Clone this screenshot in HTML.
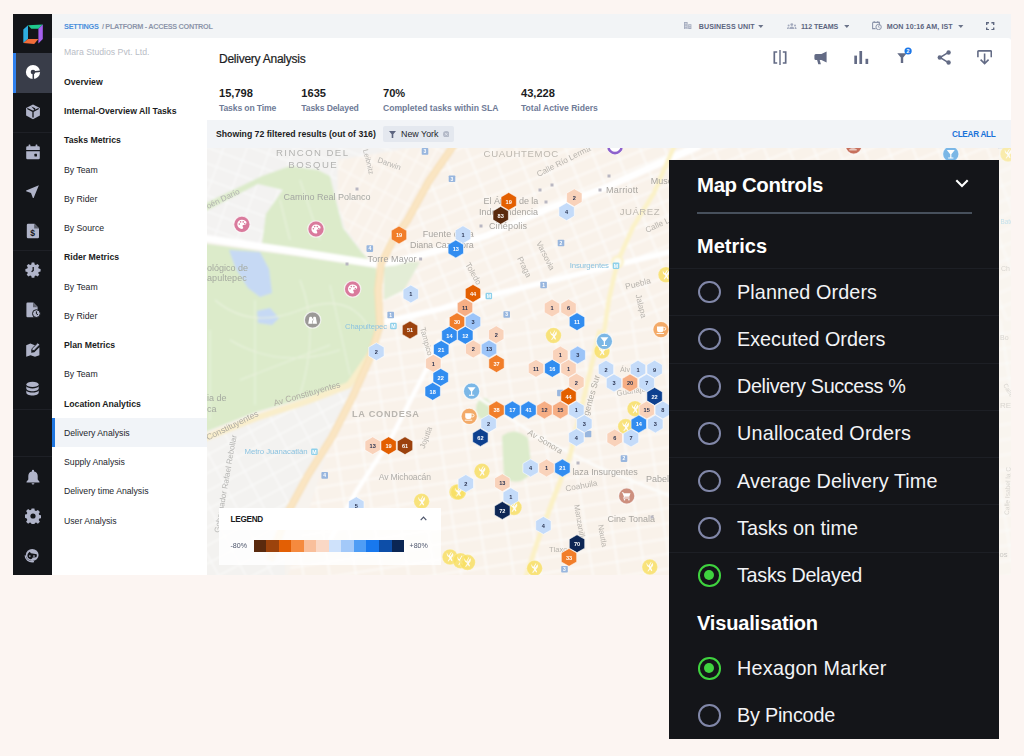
<!DOCTYPE html>
<html><head><meta charset="utf-8"><title>Delivery Analysis</title>
<style>
*{box-sizing:border-box;margin:0;padding:0}
html,body{width:1024px;height:756px;overflow:hidden}
body{background:#fcf5f2;font-family:"Liberation Sans",sans-serif;position:relative;color:#1d1f26}
.abs{position:absolute}
#app{position:absolute;left:13px;top:14px;width:998px;height:561px;background:#fff;overflow:hidden}
#rail{position:absolute;left:0;top:0;width:39px;height:561px;background:#131519}
#rail .act{position:absolute;left:0;top:39px;width:39px;height:40px;background:#393d49;border-left:3px solid #2f80ed}
#rail svg{position:absolute}
#rail .sep{position:absolute;left:0;width:39px;height:1px;background:#1e2026}
#top{position:absolute;left:39px;top:0;width:959px;height:27px;background:#f2f4f6}
#top .bc{position:absolute;left:12px;top:7.6px;font-size:7.3px;font-weight:700;letter-spacing:-.24px;color:#8d95aa;white-space:nowrap}
#top .bc b{color:#4a8fdc;margin-right:1.6px}#top .bc span{letter-spacing:-.3px}
.tr{position:absolute;top:8.5px;font-size:7.1px;font-weight:700;color:#5c6580;white-space:nowrap;letter-spacing:.1px}
#nav{position:absolute;left:39px;top:23.5px;width:155px;height:538px;background:#fff}
#nav div{position:absolute;left:12px;font-size:8.7px;white-space:nowrap;color:#23252c;line-height:12px}
#nav .h{font-weight:700;color:#1b1c22}
#nav .sel{left:0;width:155px;height:29px;background:#f1f4f8;border-left:3px solid #1f76e0}
#main{position:absolute;left:194px;top:23.5px;width:804px;height:538px;background:#fff;border-top-right-radius:3px;overflow:hidden}
#title{position:absolute;left:12px;top:14px;font-size:12px;letter-spacing:-.25px;-webkit-text-stroke:.2px #1b1c22;color:#1b1c22;white-space:nowrap}
.st{position:absolute;top:49.5px;white-space:nowrap}
.st b{display:block;font-size:11.1px;color:#1b1c22;line-height:13px}
.st span{display:block;font-size:8.6px;color:#6f7b97;font-weight:700;margin-top:2.8px;line-height:11px}
#fbar{position:absolute;left:0;top:82px;width:804px;height:28.5px;background:#f2f4f7}
#fbar .sh{position:absolute;left:9px;top:9.8px;font-size:8.7px;font-weight:700;color:#1b1c22;white-space:nowrap}
#fbar .chip{position:absolute;left:175.6px;top:6px;width:71.2px;height:16.6px;background:#e4e8ef;border-radius:2px}
#fbar .chip span{position:absolute;left:18.4px;top:3.2px;font-size:8.9px;color:#23252c;white-space:nowrap}
#fbar .clr{position:absolute;right:15.5px;top:10.9px;font-size:8.2px;letter-spacing:-.29px;font-weight:700;color:#1a73d9;white-space:nowrap}
#map{position:absolute;left:0;top:110.5px;width:804px;height:427.5px;background:#f4f2ee;overflow:hidden}
#legend{position:absolute;left:11.5px;top:359.5px;width:222px;height:57px;background:rgba(255,255,255,.82)}
#legend .lh{position:absolute;left:0;top:0;width:222px;height:22px;background:#fff}
#legend .lt{position:absolute;left:12px;top:7.7px;font-size:8.2px;font-weight:700;color:#1b1c22;letter-spacing:-.28px}
#legend .pc{position:absolute;top:34px;font-size:7.1px;color:#4d556b}
#legend .bar{position:absolute;left:35px;top:32.5px;height:11.5px;width:150.6px;display:flex}
#legend .bar i{flex:1;display:block}
#panel{position:absolute;left:669px;top:160px;width:330px;height:579px;background:#141519}
#panel .t{position:absolute;left:28px;font-weight:700;color:#fff;white-space:nowrap}
#panel .hr{position:absolute;left:28px;top:52px;width:275px;height:1.8px;background:#47505c}
#panel .row{position:absolute;left:0;width:330px;height:47px;border-top:1px solid #1d1f25}
#panel .row i{position:absolute;left:29.2px;top:11.6px;width:22.6px;height:22.6px;border:2.3px solid #8187a8;border-radius:50%}
#panel .row i.on{border-color:#3fd33f;border-width:2.6px}
#panel .row i.on:after{content:"";position:absolute;left:3.5px;top:3.5px;width:10.4px;height:10.4px;border-radius:50%;background:#3fd33f}
#panel .row span{position:absolute;left:68px;top:11.5px;font-size:19.8px;color:#f2f3f6;white-space:nowrap;line-height:22px}
svg text{font-family:"Liberation Sans",sans-serif}
.hx text{font-size:5.6px;font-weight:700;text-anchor:middle}
</style></head>
<body>
<div id="app">
 <div id="rail">
  <div class="act"></div>
  <div class="sep" style="top:118px"></div><div class="sep" style="top:236px"></div><div class="sep" style="top:395px"></div><div class="sep" style="top:442px"></div>
  <svg style="left:9.6px;top:9.6px;width:20px;height:20.2px" viewBox="0 0 20 20"><path d="M.3 5.5L5 1.2V15L.3 18.8z" fill="#2eaee0"/><path d="M5 1.2L19.8.3l-4.4 4.4H8.3z" fill="#1fc98e"/><path d="M19.8.3V15l-4.4 4.4V4.7z" fill="#a560ee"/><path d="M.3 18.8L5 14.8l10.4.2-4.2 4.9z" fill="#f26d3a"/></svg><svg style="left:11.6px;top:50.4px;width:16px;height:16px" viewBox="0 0 16 16"><circle cx="8" cy="8" r="7.1" fill="#fff"/><circle cx="8" cy="8" r="2.3" fill="#393d49"/><path d="M8 8L15.5 7.2M8.3 8v7.5" stroke="#393d49" stroke-width="1.5" fill="none"/></svg>
<svg style="left:11.6px;top:90.1px;width:16px;height:16px" viewBox="0 0 16 16"><path d="M8 .6l6.9 3.3v7.7L8 15.2 1.1 11.6V3.9z" fill="#b0b4c9"/><path d="M8 7.4v6.2M2.3 4.5L8 7.4l5.7-2.9" stroke="#131519" stroke-width="1.3" fill="none"/><path d="M6.4 2.6L10.2 4.2 10.2 6.6 8.8 5.3z" fill="#131519"/></svg>
<svg style="left:11.8px;top:130.2px;width:16px;height:16px" viewBox="0 0 16 16"><path d="M1.2 3.4a1.2 1.2 0 0 1 1.2-1.2h11.2a1.2 1.2 0 0 1 1.2 1.2V6H1.2zM1.2 7.2h13.6v6.8a1.2 1.2 0 0 1-1.2 1.2H2.4a1.2 1.2 0 0 1-1.2-1.2z" fill="#b0b4c9"/><rect x="3.6" y=".6" width="1.8" height="3" rx=".5" fill="#b0b4c9"/><rect x="10.6" y=".6" width="1.8" height="3" rx=".5" fill="#b0b4c9"/><rect x="9.4" y="9.8" width="2.6" height="2.6" rx=".4" fill="#131519"/></svg>
<svg style="left:12.3px;top:170px;width:15px;height:15px" viewBox="0 0 16 16"><path d="M14.8 1.2L1.2 6.9v.8l5.2 2 2 5.2h.8z" fill="#b0b4c9"/></svg>
<svg style="left:11.7px;top:208.7px;width:16px;height:16px" viewBox="0 0 16 16"><path d="M3 .8h6.6L14 5.2V14a1.2 1.2 0 0 1-1.2 1.2H3A1.2 1.2 0 0 1 1.8 14V2A1.2 1.2 0 0 1 3 .8z" fill="#b0b4c9"/><path d="M9.2.8v4.8H14" fill="#131519" opacity=".55"/><text x="7.6" y="13" font-size="8.5" font-weight="700" fill="#131519" text-anchor="middle" font-family="Liberation Sans">$</text></svg>
<svg style="left:11.5px;top:248.2px;width:16px;height:16px" viewBox="0 0 16 16"><path d="M6.7.6h2.6l.4 1.9 1.2.5 1.6-1.1 1.8 1.8-1.1 1.6.5 1.2 1.9.4v2.6l-1.9.4-.5 1.2 1.1 1.6-1.8 1.8-1.6-1.1-1.2.5-.4 1.9H6.7l-.4-1.9-1.2-.5-1.6 1.1-1.8-1.8 1.1-1.6-.5-1.2-1.9-.4V6.9l1.9-.4.5-1.2-1.1-1.6 1.8-1.8 1.6 1.1 1.2-.5z" fill="#b0b4c9"/><path d="M8.2 5v3.4L6.6 9.8" stroke="#131519" stroke-width="1.3" fill="none"/></svg>
<svg style="left:11.6px;top:287.9px;width:16px;height:16px" viewBox="0 0 16 16"><path d="M2.6.6h5.8L12.6 4.8V8a4.6 4.6 0 0 0-3.8 7.2H2.6A1.2 1.2 0 0 1 1.4 14V1.8A1.2 1.2 0 0 1 2.6.6z" fill="#b0b4c9"/><path d="M8 .6v4.6h4.6" fill="#131519" opacity=".5"/><circle cx="11.4" cy="11.6" r="3.9" fill="#b0b4c9" stroke="#131519" stroke-width="1"/><path d="M11.4 9.4v2.4l1.6.9" stroke="#131519" stroke-width="1" fill="none"/></svg>
<svg style="left:11.8px;top:327.5px;width:16px;height:16px" viewBox="0 0 16 16"><path d="M1.2 3.2l4.2-1.6 4.4 1.6 1.4-.5-4.6 4.8-.4 3.2 3.2-.4 5-5v7.9l-4.4 1.6-4.4-1.6-4.4 1.6z" fill="#b0b4c9"/><path d="M12.8.8l2 2-5.6 5.6-2.4.4.4-2.4z" fill="#b0b4c9" stroke="#131519" stroke-width=".8"/></svg>
<svg style="left:12.1px;top:367.1px;width:15px;height:15px" viewBox="0 0 16 16"><ellipse cx="8" cy="3.6" rx="6.6" ry="2.9" fill="#b0b4c9"/><path d="M1.4 5.6c1 1.5 3.5 2.3 6.6 2.3s5.6-.8 6.6-2.3v2.5c0 1.6-2.9 2.9-6.6 2.9S1.4 9.7 1.4 8.1zM1.4 10c1 1.5 3.5 2.3 6.6 2.3s5.6-.8 6.6-2.3v2.5c0 1.6-2.9 2.9-6.6 2.9s-6.6-1.3-6.6-2.9z" fill="#b0b4c9"/></svg>
<svg style="left:11.8px;top:454.9px;width:16px;height:16px" viewBox="0 0 16 16"><path d="M8 .8a1.1 1.1 0 0 1 1.1 1.1v.5a4.7 4.7 0 0 1 3.6 4.6v3.6l1.8 2.2v.8H1.5v-.8l1.8-2.2V7a4.7 4.7 0 0 1 3.6-4.6v-.5A1.1 1.1 0 0 1 8 .8zM6.6 14.2h2.8a1.4 1.4 0 0 1-2.8 0z" fill="#b0b4c9"/></svg>
<svg style="left:11.6px;top:494px;width:16px;height:16px" viewBox="0 0 16 16"><path d="M6.6.4h2.8l.4 2.1 1.3.6 1.8-1.2 2 2-1.2 1.8.6 1.3 2.1.4v2.8l-2.1.4-.6 1.3 1.2 1.8-2 2-1.8-1.2-1.3.6-.4 2.1H6.6l-.4-2.1-1.3-.6-1.8 1.2-2-2 1.2-1.8-.6-1.3L-.4 9.4V6.6l2.1-.4.6-1.3-1.2-1.8 2-2 1.8 1.2 1.3-.6z" fill="#b0b4c9"/><circle cx="8" cy="8" r="2.6" fill="#131519"/></svg>
<svg style="left:11.4px;top:534.2px;width:16px;height:16px" viewBox="0 0 16 16"><ellipse cx="8.2" cy="7" rx="6.4" ry="6" fill="#b0b4c9"/><path d="M3.4 7.6C3.6 5.8 4.6 4.6 5.8 3.8L6.9 5.2C9 5.6 11 6 12.7 6.2C13 7.4 12.8 8.6 12.2 9.2L8.6 9.6C8.3 10.6 7.6 11.2 6.6 11.2C4.8 11.2 3.4 9.6 3.4 7.6Z" fill="#131519"/><circle cx="5.8" cy="8" r=".85" fill="#b0b4c9"/><circle cx="10" cy="8" r=".85" fill="#b0b4c9"/><path d="M1.3 7.4C1.1 11.4 4.6 14.4 10 13.6" fill="none" stroke="#b0b4c9" stroke-width="1.4"/></svg>
 </div>
 <div id="top">
  <div class="bc"><b>SETTINGS</b><span> / PLATFORM - ACCESS CONTROL</span></div>
  <svg class="abs" style="left:632.4px;top:8px" width="7.4" height="7.4" viewBox="0 0 7.4 7.4"><path d="M0 0h3.6v7.4H0zM4.2 2.2h3.2v5.2H4.2z" fill="#a3aabd"/><path d="M.8 1.4h2M.8 3h2M.8 4.6h2M.8 6.2h2M4.8 3.6h2M4.8 5.2h2" stroke="#f3f5f8" stroke-width=".6"/></svg>
<div class="tr" style="left:646.7px">BUSINESS UNIT</div>
<svg class="abs" style="left:706.2px;top:10.8px" width="5.6" height="3.2" viewBox="0 0 5.6 3.2"><path d="M.2 0h5.2L2.8 3z" fill="#6b7389"/></svg>
<svg class="abs" style="left:735px;top:8.6px" width="9.6" height="6" viewBox="0 0 9.6 6"><circle cx="4.8" cy="1.6" r="1.4" fill="#a3aabd"/><path d="M2.2 6c0-1.8 1.2-2.6 2.6-2.6S7.4 4.2 7.4 6z" fill="#a3aabd"/><circle cx="1.6" cy="2.4" r="1" fill="#a3aabd"/><circle cx="8" cy="2.4" r="1" fill="#a3aabd"/><path d="M0 6c0-1.4.7-2 1.7-2v2zM9.6 6c0-1.4-.7-2-1.7-2v2z" fill="#a3aabd"/></svg>
<div class="tr" style="left:748.9px;letter-spacing:-.1px">112 TEAMS</div>
<svg class="abs" style="left:791.6px;top:10.8px" width="5.6" height="3.2" viewBox="0 0 5.6 3.2"><path d="M.2 0h5.2L2.8 3z" fill="#6b7389"/></svg>
<svg class="abs" style="left:820.3px;top:7.2px" width="9.8" height="9" viewBox="0 0 9.8 9"><path d="M.6 1.4h6.8v3M.6 1.4v6.2h3" fill="none" stroke="#8d95ab" stroke-width="1.1"/><path d="M2.2 0v2M5.8 0v2" stroke="#8d95ab" stroke-width="1"/><circle cx="6.6" cy="6" r="2.7" fill="none" stroke="#8d95ab" stroke-width="1"/><path d="M6.6 4.6V6.2l1 .6" fill="none" stroke="#8d95ab" stroke-width=".8"/></svg>
<div class="tr" style="left:834.7px">MON 10:16 AM, IST</div>
<svg class="abs" style="left:906px;top:10.8px" width="5.6" height="3.2" viewBox="0 0 5.6 3.2"><path d="M.2 0h5.2L2.8 3z" fill="#6b7389"/></svg>
<svg class="abs" style="left:934.4px;top:7.6px" width="8.4" height="8.4" viewBox="0 0 8.4 8.4"><path d="M.7 3V.7H3M5.4.7h2.3V3M7.7 5.4v2.3H5.4M3 7.7H.7V5.4" fill="none" stroke="#5f6880" stroke-width="1.4"/></svg>
 </div>
 <div id="nav">
  <div style="top:8.9px;color:#b9bdc6">Mara Studios Pvt. Ltd.</div>
  <div class="h" style="top:38.2px">Overview</div>
  <div class="h" style="top:67.4px">Internal-Overview All Tasks</div>
  <div class="h" style="top:96.7px">Tasks Metrics</div>
  <div style="top:126px">By Team</div>
  <div style="top:155.2px">By Rider</div>
  <div style="top:184.5px">By Source</div>
  <div class="h" style="top:213.8px">Rider Metrics</div>
  <div style="top:243.1px">By Team</div>
  <div style="top:272.3px">By Rider</div>
  <div class="h" style="top:301.6px">Plan Metrics</div>
  <div style="top:330.9px">By Team</div>
  <div class="h" style="top:360.1px">Location Analytics</div>
  <div class="sel" style="top:380.5px"></div>
  <div style="top:389.4px">Delivery Analysis</div>
  <div style="top:418.7px">Supply Analysis</div>
  <div style="top:447.9px">Delivery time Analysis</div>
  <div style="top:477.2px">User Analysis</div>
 </div>
 <div id="main">
  <div id="title">Delivery Analysis</div>
  <svg class="abs" style="left:566.4px;top:12.5px" width="14" height="15.4" viewBox="0 0 14 15.4"><path d="M4.2 2H1.3V13H4.2M9.8 2h2.9V13H9.8" fill="none" stroke="#636b85" stroke-width="1.7"/><path d="M7 0V15.4" stroke="#636b85" stroke-width="1.4"/></svg>
<svg class="abs" style="left:607px;top:13.1px" width="14" height="14" viewBox="0 0 14 14"><path d="M12.6.4V11.4L7.4 8.9H5.7l1.2 4.3H4.3L3.1 8.9H1.9A1.5 1.5 0 0 1 .4 7.4V4.6a1.5 1.5 0 0 1 1.5-1.5h5.5z" fill="#636b85"/></svg>
<svg class="abs" style="left:647.4px;top:13.3px" width="15" height="13.6" viewBox="0 0 15 13.6"><rect x=".3" y="4.6" width="2.7" height="8.7" fill="#636b85"/><rect x="5.4" y="0" width="2.7" height="13.3" fill="#636b85"/><rect x="11.5" y="7.8" width="2.7" height="5.5" fill="#636b85"/></svg>
<svg class="abs" style="left:690.2px;top:9.5px" width="16" height="17" viewBox="0 0 16 17"><path d="M.3 6.3h9.4L6.2 10.6V16H3.8V10.6z" fill="#636b85"/><circle cx="11.1" cy="4" r="3.6" fill="#1b76e8"/><text x="11.1" y="5.9" font-size="5.4" font-weight="700" fill="#fff" text-anchor="middle">2</text></svg>
<svg class="abs" style="left:730px;top:12.5px" width="15" height="15" viewBox="0 0 15 15"><path d="M11.4 2.4L3 7.5l8.4 5.1" fill="none" stroke="#636b85" stroke-width="1.5"/><circle cx="11.6" cy="2.5" r="2.2" fill="#636b85"/><circle cx="2.8" cy="7.5" r="2.2" fill="#636b85"/><circle cx="11.6" cy="12.5" r="2.2" fill="#636b85"/></svg>
<svg class="abs" style="left:770.2px;top:12.5px" width="15.2" height="15.4" viewBox="0 0 15.2 15.4"><path d="M.9 7.2V1.6a.7.7 0 0 1 .7-.7H13.6a.7.7 0 0 1 .7.7V7.2" fill="none" stroke="#636b85" stroke-width="1.6"/><path d="M7.6 3.4V13.2M3.6 9.6l4 4 4-4" fill="none" stroke="#636b85" stroke-width="1.6"/></svg>
  <div class="st" style="left:12px"><b>15,798</b><span style="letter-spacing:-.14px">Tasks on Time</span></div>
  <div class="st" style="left:94.3px"><b>1635</b><span style="letter-spacing:-.13px">Tasks Delayed</span></div>
  <div class="st" style="left:176px"><b>70%</b><span>Completed tasks within SLA</span></div>
  <div class="st" style="left:314px"><b>43,228</b><span>Total Active Riders</span></div>
  <div id="fbar">
   <div class="sh">Showing 72 filtered results (out of 316)</div>
   <div class="chip"><svg class="abs" style="left:6.2px;top:5px" width="7" height="7" viewBox="0 0 7 7"><path d="M0 0h7L4.3 3.2V7H2.7V3.2z" fill="#5c6580"/></svg><span>New York</span><svg class="abs" style="left:60px;top:5px" width="6.5" height="6.5" viewBox="0 0 10 10"><circle cx="5" cy="5" r="5" fill="#b3b9c7"/><path d="M3.2 3.2l3.6 3.6M6.8 3.2L3.2 6.8" stroke="#e4e8ef" stroke-width="1.2"/></svg></div>
   <div class="clr">CLEAR ALL</div>
  </div>
  <div id="map">
<svg class="abs" style="left:-207px;top:-148px" width="1024" height="756" viewBox="0 0 1024 756">

<defs>
 <pattern id="g1" width="23" height="14" patternUnits="userSpaceOnUse" patternTransform="rotate(-22 500 250)">
  <rect width="23" height="14" fill="#f9f2ea"/><path d="M0 0H23M0 0V14" stroke="#fdfcfa" stroke-width="3"/>
 </pattern>
 <pattern id="g2" width="26" height="15" patternUnits="userSpaceOnUse" patternTransform="rotate(-9 550 450)">
  <rect width="26" height="15" fill="#f9f2ea"/><path d="M0 0H26M0 0V15" stroke="#fdfcfa" stroke-width="3"/>
 </pattern>
 <pattern id="g3" width="24" height="16" patternUnits="userSpaceOnUse" patternTransform="rotate(-28 300 500)">
  <rect width="24" height="16" fill="#f3f2f0"/><path d="M0 0H24M0 0V16" stroke="#fbfbfa" stroke-width="2.4"/>
 </pattern>
 <pattern id="g4" width="22" height="15" patternUnits="userSpaceOnUse" patternTransform="rotate(20 300 170)">
  <rect width="22" height="15" fill="#f3f2f1"/><path d="M0 0H22M0 0V15" stroke="#fafafa" stroke-width="2.4"/>
 </pattern>
  <pattern id="g5" width="21" height="13" patternUnits="userSpaceOnUse" patternTransform="rotate(-62 400 200)">
  <rect width="21" height="13" fill="#f9f2ea"/><path d="M0 0H21M0 0V13" stroke="#fdfbf8" stroke-width="2.4"/>
 </pattern>
 <filter id="bl"><feGaussianBlur stdDeviation=".9"/></filter><filter id="bl2"><feGaussianBlur stdDeviation=".45"/></filter><filter id="bl3"><feGaussianBlur stdDeviation=".3"/></filter>
</defs>
<g filter="url(#bl)">
<rect x="200" y="140" width="830" height="445" fill="#f7f3ee"/>
<!-- upper urban (Cuauhtemoc / Juarez) -->
<path d="M452 140H1020V330H375V250L395 236Z" fill="url(#g1)"/>
<!-- lower urban (Condesa / Roma) -->
<path d="M384 320H1020V585H285L332 437L370 358Z" fill="url(#g2)"/>
<!-- lower-left grey area -->
<path d="M200 440L256 418L308 401L349 385L370 358L332 437L308 475L285 520V585H200Z" fill="url(#g3)"/>
<!-- upper-left Polanco -->
<path d="M200 140H456L429 181L407 221L393 240L380 264L200 238Z" fill="url(#g4)"/>
<path d="M338 160L456 140L429 181L407 221L393 240L381 264L372 264L345 228L337 200Z" fill="url(#g5)"/>
<!-- park strips -->
<path d="M200 206L262 176L290 166L318 170L330 176L337 205L343 228L360 250L374 266L262 244L266 214L283 190L258 184L200 214Z" fill="#dcebca"/>
<path d="M263 243L266 214L283 190L300 178L322 175L331 205L338 228L355 250Z" fill="#dcebca"/>
<!-- Chapultepec park -->
<path d="M200 243L296 256L376 268L378 290L381 326L370 358L351 383L308 397L256 412L200 434Z" fill="#dcebca"/>
<path d="M384 262L420 262L404 290L384 300Z" fill="#e3edd6"/>
<!-- lakes -->
<path d="M229 250L260 252L269 269L272 293L260 297L248 288L236 269Z" fill="#c6d9f4"/>
<path d="M257 311L270 308L279 318L272 325L258 323Z" fill="#c6d9f4"/>
<!-- small parks -->
<ellipse cx="484" cy="409" rx="8" ry="11" fill="#dcebcb"/>
<path d="M502 436Q515 426 528 438L532 472Q520 488 504 478Z" fill="#dcebcb"/>
<!-- park paths -->
<g fill="none" stroke="#eaf2de" stroke-width="1.1">
<path d="M215 300Q250 330 300 310T370 330M230 340Q280 370 340 350M240 380L330 345M210 330V420M255 300V405M300 280Q320 330 300 395M330 285L350 375M280 200L290 240M300 180L320 240"/>
</g>
<!-- Reforma (white wide road) -->
<path d="M200 237.5L296 251.5L376 264L395 262L440 250L488 235L547 209L607 187L669 159L700 146" fill="none" stroke="#fff" stroke-width="7"/>
<!-- Av Chapultepec -->
<path d="M384 322L440 309L500 293L583 273L669 252L720 240" fill="none" stroke="#fff" stroke-width="5.5"/>
<!-- diag white roads lower -->
<path d="M440 340L425 372L390 440L356 492L330 540" fill="none" stroke="#fff" stroke-width="4.5"/>
<path d="M470 392L540 438L600 468L680 500" fill="none" stroke="#fdfcfa" stroke-width="3"/>
<path d="M600 330L570 456L553 500L538 540L525 580" fill="none" stroke="#fbf1c6" stroke-width="5"/>
<!-- Insurgentes yellow upper -->
<path d="M676 142L654 193L633 227L617.5 262L609 299L603 340" fill="none" stroke="#fbf2c8" stroke-width="4.6"/>
<!-- glorieta --><circle cx="617.5" cy="262" r="5.2" fill="#fdfbf3" stroke="#fbf2c8" stroke-width="2.4"/>
<!-- Constituyentes -->
<path d="M200 440L256 418L308 401L349 385L372 352" fill="none" stroke="#f9eecb" stroke-width="6.5"/>
<!-- orange road -->
<path d="M456 142L429 181L407 221L393 240L381 264L378 290L380 325L370 358L353 396L332 437L308 475L288 512L270 560" fill="none" stroke="#f6dcae" stroke-width="7.4"/>
<path d="M456 142L429 181L407 221L393 240L381 264L378 290L380 325L370 358L353 396L332 437L308 475L288 512L270 560" fill="none" stroke="#fae5c2" stroke-width="5.6"/>
</g>
<g class="ml" filter="url(#bl2)"><text x="276" y="155.6" font-size="9.6" fill="#b3b3b1" text-anchor="start" font-weight="400" textLength="72" lengthAdjust="spacing">RINCON DEL</text>
<text x="288.3" y="167.6" font-size="9.6" fill="#b3b3b1" text-anchor="start" font-weight="400" textLength="48.4" lengthAdjust="spacing">BOSQUE</text>
<text x="483.6" y="156.8" font-size="9.6" fill="#bdb8b0" text-anchor="start" font-weight="400" textLength="74.7" lengthAdjust="spacing">CUAUHTEMOC</text>
<text x="619.8" y="214.6" font-size="9.6" fill="#bdb8b0" text-anchor="start" font-weight="400" textLength="39.7" lengthAdjust="spacing">JUÁREZ</text>
<text x="352" y="417.4" font-size="9.2" fill="#b9b5af" text-anchor="start" font-weight="700" textLength="67" lengthAdjust="spacing">LA CONDESA</text>
<text x="283.6" y="200" font-size="9" fill="#a5a7a3" text-anchor="start" font-weight="400" textLength="87" lengthAdjust="spacing">Camino Real Polanco</text>
<text x="367.6" y="261.8" font-size="9" fill="#a3a29f" text-anchor="start" font-weight="400" textLength="48.8" lengthAdjust="spacing">Torre Mayor</text>
<text x="422.7" y="237.4" font-size="9" fill="#a8a5a0" text-anchor="start" font-weight="400" textLength="51" lengthAdjust="spacing">Fuente de la</text>
<text x="410" y="247.8" font-size="9" fill="#a8a5a0" text-anchor="start" font-weight="400" textLength="63.8" lengthAdjust="spacing">Diana Cazadora</text>
<text x="483.6" y="204.4" font-size="9" fill="#a8a5a0" text-anchor="start" font-weight="400" textLength="54.7" lengthAdjust="spacing">El Ángel de la</text>
<text x="479" y="214.7" font-size="9" fill="#a8a5a0" text-anchor="start" font-weight="400" textLength="59" lengthAdjust="spacing">Independencia</text>
<text x="489" y="229" font-size="9" fill="#a8a5a0" text-anchor="start" font-weight="400" textLength="38" lengthAdjust="spacing">Cinépolis</text>
<text x="606" y="192.8" font-size="9" fill="#a8a5a0" text-anchor="start" font-weight="400" textLength="32" lengthAdjust="spacing">Marriott</text>
<text x="650.7" y="184" font-size="9" fill="#a8a5a0" text-anchor="start" font-weight="400">Museo</text>
<text x="207" y="271" font-size="9" fill="#a5aaa0" text-anchor="start" font-weight="400" textLength="41" lengthAdjust="spacing">ológico de</text>
<text x="207" y="281" font-size="9" fill="#a5aaa0" text-anchor="start" font-weight="400" textLength="39.8" lengthAdjust="spacing">apultepec</text>
<text x="207" y="401.4" font-size="9" fill="#a5aaa0" text-anchor="start" font-weight="400">ia de</text>
<text x="207" y="411.7" font-size="9" fill="#a5aaa0" text-anchor="start" font-weight="400">ca</text>
<text x="572.4" y="475.3" font-size="9" fill="#a8a5a0" text-anchor="start" font-weight="400" textLength="65.3" lengthAdjust="spacing">laza Insurgentes</text>
<text x="646" y="482" font-size="9" fill="#a8a5a0" text-anchor="start" font-weight="400">Pabell</text>
<text x="607.5" y="522" font-size="9" fill="#a8a5a0" text-anchor="start" font-weight="400" textLength="47.5" lengthAdjust="spacing">Cine Tonalá</text>
<text x="378.7" y="479.5" font-size="8.6" fill="#b0aeaa" text-anchor="start" font-weight="400" textLength="52.3" lengthAdjust="spacing">Av Michoacán</text>
<text x="549" y="551.5" font-size="7.6" fill="#b8b4ae" text-anchor="start" font-weight="400">Tlaxc</text>
<text x="345" y="328.5" font-size="7.6" fill="#8cc3e0" text-anchor="start" font-weight="400" textLength="42" lengthAdjust="spacing">Chapultepec</text>
<text x="244.5" y="454.3" font-size="7.8" fill="#8cc3e0" text-anchor="start" font-weight="400" textLength="63" lengthAdjust="spacing">Metro Juanacatlán</text>
<text x="569.8" y="268.3" font-size="7.8" fill="#8cc3e0" text-anchor="start" font-weight="400" textLength="39.2" lengthAdjust="spacing">Insurgentes</text>
<text x="208" y="209" font-size="8.2" fill="#b4b4b2" text-anchor="start" font-weight="400" transform="rotate(-26 208 209)">oén Darío</text>
<text x="377" y="162" font-size="7.8" fill="#b8b6b2" text-anchor="start" font-weight="400" transform="rotate(20 377 162)">Darwin</text>
<text x="363" y="150" font-size="7.4" fill="#b8b6b2" text-anchor="start" font-weight="400" transform="rotate(76 363 150)">Leibnitz</text>
<text x="538.5" y="177" font-size="8.2" fill="#b8b4ae" text-anchor="start" font-weight="400" transform="rotate(-27 538.5 177)">Calle Río Lerma</text>
<text x="647" y="233" font-size="8.2" fill="#b8b4ae" text-anchor="start" font-weight="400" transform="rotate(-25 647 233)">Calle L</text>
<text x="536" y="243" font-size="8.2" fill="#b8b4ae" text-anchor="start" font-weight="400" transform="rotate(63 536 243)">Varsovia</text>
<text x="517" y="258.5" font-size="8.2" fill="#b8b4ae" text-anchor="start" font-weight="400" transform="rotate(63 517 258.5)">Praga</text>
<text x="465" y="264.5" font-size="8.2" fill="#b8b4ae" text-anchor="start" font-weight="400" transform="rotate(60 465 264.5)">Toledo</text>
<text x="626" y="289.5" font-size="8.4" fill="#b8b4ae" text-anchor="start" font-weight="400" transform="rotate(-14 626 289.5)">Puebla</text>
<text x="635.5" y="295" font-size="8.2" fill="#b8b4ae" text-anchor="start" font-weight="400" transform="rotate(76 635.5 295)">Jalapa</text>
<text x="420" y="328" font-size="7.8" fill="#b8b4ae" text-anchor="start" font-weight="400" transform="rotate(75 420 328)">Tampico</text>
<text x="274.5" y="406" font-size="8.6" fill="#b0ada4" text-anchor="start" font-weight="400" transform="rotate(-16 274.5 406)">Av Constituyentes</text>
<text x="208" y="440.5" font-size="8.6" fill="#b0ada4" text-anchor="start" font-weight="400" transform="rotate(-26 208 440.5)">Constituyentes</text>
<text x="219.5" y="533" font-size="7.8" fill="#b4b4b2" text-anchor="start" font-weight="400" textLength="99" lengthAdjust="spacing" transform="rotate(-80 219.5 533)">Gobernador Rafael Rebollar</text>
<text x="424.5" y="449" font-size="7.8" fill="#b8b4ae" text-anchor="start" font-weight="400" transform="rotate(-70 424.5 449)">Jojutla</text>
<text x="527" y="434" font-size="8.4" fill="#b0aca4" text-anchor="start" font-weight="400" transform="rotate(31 527 434)">Av Sonora</text>
<text x="566" y="491.5" font-size="8.2" fill="#b8b4ae" text-anchor="start" font-weight="400" transform="rotate(-11 566 491.5)">Coahuila</text>
<text x="574" y="505" font-size="7.8" fill="#b8b4ae" text-anchor="start" font-weight="400" transform="rotate(80 574 505)">Manzanillo</text>
<text x="598" y="525" font-size="7.8" fill="#b8b4ae" text-anchor="start" font-weight="400" transform="rotate(80 598 525)">Nautla</text>
<text x="588.5" y="416" font-size="8.6" fill="#b0aca4" text-anchor="start" font-weight="400" transform="rotate(-74 588.5 416)">gentes Sur</text>
<text x="617" y="396" font-size="7.8" fill="#b8b4ae" text-anchor="start" font-weight="400" transform="rotate(-9 617 396)">Guanaju</text>
<text x="620" y="372" font-size="7.2" fill="#b8b4ae" text-anchor="start" font-weight="400">Álv</text>
<text x="1009" y="515" font-size="6.6" fill="#c2bdb6" text-anchor="start" font-weight="400" transform="rotate(-88 1009 515)">Calle Isabel la C</text>
<text x="1000.5" y="224" font-size="6.4" fill="#9ed0e4" text-anchor="start" font-weight="400">Batc</text>
<text x="1001" y="271" font-size="7" fill="#c2bdb6" text-anchor="start" font-weight="400">Ch</text>
<text x="1000" y="340" font-size="7" fill="#c2bdb6" text-anchor="start" font-weight="400">Bo</text>
<text x="1000" y="408" font-size="8" fill="#c2bdb6" text-anchor="start" font-weight="400">RE</text>
<text x="1003" y="385" font-size="6.4" fill="#c2bdb6" text-anchor="start" font-weight="400" transform="rotate(60 1003 385)">Calle</text>
<text x="999.5" y="557" font-size="7.6" fill="#a8a5a0" text-anchor="start" font-weight="400">os</text>
<rect x="366.5" y="245.3" width="6.6" height="6.6" rx=".8" fill="#98b6de"/><text x="369.8" y="250.4" font-size="5" font-weight="700" fill="#fff" text-anchor="middle">4</text>
<rect x="421.7" y="148.1" width="6.6" height="6.6" rx=".8" fill="#98b6de"/><text x="425" y="153.2" font-size="5" font-weight="700" fill="#fff" text-anchor="middle">3</text>
<rect x="387.4" y="311.7" width="6.6" height="6.6" rx=".8" fill="#98b6de"/><text x="390.7" y="316.8" font-size="5" font-weight="700" fill="#fff" text-anchor="middle">1</text>
<rect x="448.7" y="175.5" width="6.6" height="6.6" rx=".8" fill="#98b6de"/><text x="452" y="180.6" font-size="5" font-weight="700" fill="#fff" text-anchor="middle">3</text>
<rect x="557.7" y="239.7" width="6.6" height="6.6" rx=".8" fill="#98b6de"/><text x="561" y="244.8" font-size="5" font-weight="700" fill="#fff" text-anchor="middle">2</text>
<rect x="540.3" y="281.7" width="6.6" height="6.6" rx=".8" fill="#98b6de"/><text x="543.6" y="286.8" font-size="5" font-weight="700" fill="#fff" text-anchor="middle">1</text>
<rect x="503.4" y="311.2" width="6.6" height="6.6" rx=".8" fill="#98b6de"/><text x="506.7" y="316.3" font-size="5" font-weight="700" fill="#fff" text-anchor="middle">3</text>
<rect x="321.4" y="472.1" width="6.6" height="6.6" rx=".8" fill="#98b6de"/><text x="324.7" y="477.2" font-size="5" font-weight="700" fill="#fff" text-anchor="middle">4</text>
<rect x="557.1" y="389.7" width="6.6" height="6.6" rx=".8" fill="#98b6de"/><text x="560.4" y="394.8" font-size="5" font-weight="700" fill="#fff" text-anchor="middle"></text>
<rect x="584.7" y="430.7" width="6.6" height="6.6" rx=".8" fill="#98b6de"/><text x="588" y="435.8" font-size="5" font-weight="700" fill="#fff" text-anchor="middle"></text>
<rect x="620.7" y="455.3" width="6.6" height="6.6" rx=".8" fill="#98b6de"/><text x="624" y="460.4" font-size="5" font-weight="700" fill="#fff" text-anchor="middle">2</text>
<rect x="561.2" y="566" width="6.6" height="6.6" rx=".8" fill="#98b6de"/><text x="564.5" y="571.1" font-size="5" font-weight="700" fill="#fff" text-anchor="middle">3</text>
<rect x="997.7" y="141.7" width="6.6" height="6.6" rx=".8" fill="#98b6de"/><text x="1001" y="146.8" font-size="5" font-weight="700" fill="#fff" text-anchor="middle"></text>
<rect x="390.1" y="322.7" width="6.6" height="6.6" rx="1.2" fill="#8ed0ea"/><text x="393.4" y="327.9" font-size="5.2" font-weight="700" fill="#fff" text-anchor="middle">M</text>
<rect x="311.1" y="448.4" width="6.6" height="6.6" rx="1.2" fill="#8ed0ea"/><text x="314.4" y="453.6" font-size="5.2" font-weight="700" fill="#fff" text-anchor="middle">M</text>
<rect x="612.7" y="262.4" width="6.6" height="6.6" rx="1.2" fill="#8ed0ea"/><text x="616" y="267.6" font-size="5.2" font-weight="700" fill="#fff" text-anchor="middle">M</text>
<rect x="485.5" y="292.7" width="6.6" height="6.6" rx="1.2" fill="#8ed0ea"/><text x="488.8" y="297.9" font-size="5.2" font-weight="700" fill="#fff" text-anchor="middle">M</text>
<rect x="419.1" y="257.5" width="3" height="3" fill="#b9b7c2"/>
<rect x="345.5" y="262.5" width="3" height="3" fill="#b9b7c2"/>
<rect x="479.5" y="224.5" width="3" height="3" fill="#b9b7c2"/>
<rect x="544.5" y="200.5" width="3" height="3" fill="#b9b7c2"/>
<rect x="538.5" y="188.5" width="3" height="3" fill="#b9b7c2"/>
<rect x="550.5" y="183.5" width="3" height="3" fill="#b9b7c2"/>
<rect x="598.5" y="188.5" width="3" height="3" fill="#b9b7c2"/>
<rect x="607.5" y="174.5" width="3" height="3" fill="#b9b7c2"/>
<rect x="650.5" y="515.5" width="3" height="3" fill="#b9b7c2"/>
<rect x="576.5" y="461.5" width="3" height="3" fill="#b9b7c2"/>
<rect x="355.5" y="187.5" width="3" height="3" fill="#b9b7c2"/></g>
<g filter="url(#bl2)"><g transform="translate(241.9 224.3)" opacity="1"><circle r="8.2" fill="#d97a9c" stroke="#fff" stroke-opacity="0.75" stroke-width="1.2"/><path d="M0-4.6a4.6 4.6 0 1 0 0 9.2c.9 0 1.3-.6 1.3-1.2 0-.9-.7-1.1-.7-1.8 0-.6.5-1 1.1-1H3a2.6 2.6 0 0 0 1.6-2.4C4.6-3 2.5-4.6 0-4.6z" fill="#fff"/><circle cx="-2.6" cy="-.2" r=".8" fill="#d97a9c"/><circle cx="-1.3" cy="-2.4" r=".8" fill="#d97a9c"/><circle cx="1.3" cy="-2.4" r=".8" fill="#d97a9c"/><circle cx="2.8" cy="-.5" r=".8" fill="#d97a9c"/></g>
<g transform="translate(316 229)" opacity="1"><circle r="8.2" fill="#d97a9c" stroke="#fff" stroke-opacity="0.75" stroke-width="1.2"/><path d="M0-4.6a4.6 4.6 0 1 0 0 9.2c.9 0 1.3-.6 1.3-1.2 0-.9-.7-1.1-.7-1.8 0-.6.5-1 1.1-1H3a2.6 2.6 0 0 0 1.6-2.4C4.6-3 2.5-4.6 0-4.6z" fill="#fff"/><circle cx="-2.6" cy="-.2" r=".8" fill="#d97a9c"/><circle cx="-1.3" cy="-2.4" r=".8" fill="#d97a9c"/><circle cx="1.3" cy="-2.4" r=".8" fill="#d97a9c"/><circle cx="2.8" cy="-.5" r=".8" fill="#d97a9c"/></g>
<g transform="translate(352.6 289)" opacity="1"><circle r="8.2" fill="#d97a9c" stroke="#fff" stroke-opacity="0.75" stroke-width="1.2"/><path d="M0-4.6a4.6 4.6 0 1 0 0 9.2c.9 0 1.3-.6 1.3-1.2 0-.9-.7-1.1-.7-1.8 0-.6.5-1 1.1-1H3a2.6 2.6 0 0 0 1.6-2.4C4.6-3 2.5-4.6 0-4.6z" fill="#fff"/><circle cx="-2.6" cy="-.2" r=".8" fill="#d97a9c"/><circle cx="-1.3" cy="-2.4" r=".8" fill="#d97a9c"/><circle cx="1.3" cy="-2.4" r=".8" fill="#d97a9c"/><circle cx="2.8" cy="-.5" r=".8" fill="#d97a9c"/></g>
<g transform="translate(312.6 320)" opacity="1"><circle r="8.2" fill="#9b9997" stroke="#fff" stroke-opacity="0.75" stroke-width="1.2"/><path d="M-4.4 3.8L-3.3-2.4Q-3.2-3.2-2.4-3.2H-1.4Q-.7-3.2-.6-2.4L-.2 3.8ZM4.4 3.8L3.3-2.4Q3.2-3.2 2.4-3.2H1.4Q.7-3.2.6-2.4L.2 3.8ZM-.8-1.6H.8V.6H-.8Z" fill="#fff"/></g>
<g transform="translate(553.5 335.5)" opacity="0.82"><circle r="7.8" fill="#f8df62" stroke="#fff" stroke-opacity="0.2" stroke-width="1.2"/><path d="M-3.2-4.4c-.2 2.4.5 4 2 4.4L1.6 4.2l.9-.6-1.8-4c1.6-1 2.6-2.6 2.5-4l-2.6 3.6-.7-.3 1.8-3.8-.6-.2-2.2 3.6-.8-.3z" fill="#fff"/><path d="M-2.4 4.2l5-7.8c.9.6 1 2 .1 3.2L-1.6 4.6z" fill="#fff" opacity=".9"/></g>
<g transform="translate(482 471.3)" opacity="0.82"><circle r="7.8" fill="#f8df62" stroke="#fff" stroke-opacity="0.2" stroke-width="1.2"/><path d="M-3.2-4.4c-.2 2.4.5 4 2 4.4L1.6 4.2l.9-.6-1.8-4c1.6-1 2.6-2.6 2.5-4l-2.6 3.6-.7-.3 1.8-3.8-.6-.2-2.2 3.6-.8-.3z" fill="#fff"/><path d="M-2.4 4.2l5-7.8c.9.6 1 2 .1 3.2L-1.6 4.6z" fill="#fff" opacity=".9"/></g>
<g transform="translate(457 492)" opacity="0.82"><circle r="7.8" fill="#f8df62" stroke="#fff" stroke-opacity="0.2" stroke-width="1.2"/><path d="M-3.2-4.4c-.2 2.4.5 4 2 4.4L1.6 4.2l.9-.6-1.8-4c1.6-1 2.6-2.6 2.5-4l-2.6 3.6-.7-.3 1.8-3.8-.6-.2-2.2 3.6-.8-.3z" fill="#fff"/><path d="M-2.4 4.2l5-7.8c.9.6 1 2 .1 3.2L-1.6 4.6z" fill="#fff" opacity=".9"/></g>
<g transform="translate(450 557)" opacity="0.82"><circle r="7.8" fill="#f8df62" stroke="#fff" stroke-opacity="0.2" stroke-width="1.2"/><path d="M-3.2-4.4c-.2 2.4.5 4 2 4.4L1.6 4.2l.9-.6-1.8-4c1.6-1 2.6-2.6 2.5-4l-2.6 3.6-.7-.3 1.8-3.8-.6-.2-2.2 3.6-.8-.3z" fill="#fff"/><path d="M-2.4 4.2l5-7.8c.9.6 1 2 .1 3.2L-1.6 4.6z" fill="#fff" opacity=".9"/></g>
<g transform="translate(460.6 560.7)" opacity="0.82"><circle r="7.8" fill="#f8df62" stroke="#fff" stroke-opacity="0.2" stroke-width="1.2"/><path d="M-3.2-4.4c-.2 2.4.5 4 2 4.4L1.6 4.2l.9-.6-1.8-4c1.6-1 2.6-2.6 2.5-4l-2.6 3.6-.7-.3 1.8-3.8-.6-.2-2.2 3.6-.8-.3z" fill="#fff"/><path d="M-2.4 4.2l5-7.8c.9.6 1 2 .1 3.2L-1.6 4.6z" fill="#fff" opacity=".9"/></g>
<g transform="translate(467.5 562.4)" opacity="0.82"><circle r="7.8" fill="#f8df62" stroke="#fff" stroke-opacity="0.2" stroke-width="1.2"/><path d="M-3.2-4.4c-.2 2.4.5 4 2 4.4L1.6 4.2l.9-.6-1.8-4c1.6-1 2.6-2.6 2.5-4l-2.6 3.6-.7-.3 1.8-3.8-.6-.2-2.2 3.6-.8-.3z" fill="#fff"/><path d="M-2.4 4.2l5-7.8c.9.6 1 2 .1 3.2L-1.6 4.6z" fill="#fff" opacity=".9"/></g>
<g transform="translate(534.6 568.3)" opacity="0.82"><circle r="7.8" fill="#f8df62" stroke="#fff" stroke-opacity="0.2" stroke-width="1.2"/><path d="M-3.2-4.4c-.2 2.4.5 4 2 4.4L1.6 4.2l.9-.6-1.8-4c1.6-1 2.6-2.6 2.5-4l-2.6 3.6-.7-.3 1.8-3.8-.6-.2-2.2 3.6-.8-.3z" fill="#fff"/><path d="M-2.4 4.2l5-7.8c.9.6 1 2 .1 3.2L-1.6 4.6z" fill="#fff" opacity=".9"/></g>
<g transform="translate(649.8 567)" opacity="0.82"><circle r="7.8" fill="#f8df62" stroke="#fff" stroke-opacity="0.2" stroke-width="1.2"/><path d="M-3.2-4.4c-.2 2.4.5 4 2 4.4L1.6 4.2l.9-.6-1.8-4c1.6-1 2.6-2.6 2.5-4l-2.6 3.6-.7-.3 1.8-3.8-.6-.2-2.2 3.6-.8-.3z" fill="#fff"/><path d="M-2.4 4.2l5-7.8c.9.6 1 2 .1 3.2L-1.6 4.6z" fill="#fff" opacity=".9"/></g>
<g transform="translate(635 408.7)" opacity="0.82"><circle r="7.8" fill="#f8df62" stroke="#fff" stroke-opacity="0.2" stroke-width="1.2"/><path d="M-3.2-4.4c-.2 2.4.5 4 2 4.4L1.6 4.2l.9-.6-1.8-4c1.6-1 2.6-2.6 2.5-4l-2.6 3.6-.7-.3 1.8-3.8-.6-.2-2.2 3.6-.8-.3z" fill="#fff"/><path d="M-2.4 4.2l5-7.8c.9.6 1 2 .1 3.2L-1.6 4.6z" fill="#fff" opacity=".9"/></g>
<g transform="translate(625.7 426.6)" opacity="0.82"><circle r="7.8" fill="#f8df62" stroke="#fff" stroke-opacity="0.2" stroke-width="1.2"/><path d="M-3.2-4.4c-.2 2.4.5 4 2 4.4L1.6 4.2l.9-.6-1.8-4c1.6-1 2.6-2.6 2.5-4l-2.6 3.6-.7-.3 1.8-3.8-.6-.2-2.2 3.6-.8-.3z" fill="#fff"/><path d="M-2.4 4.2l5-7.8c.9.6 1 2 .1 3.2L-1.6 4.6z" fill="#fff" opacity=".9"/></g>
<g transform="translate(514 507.4)" opacity="0.82"><circle r="7.8" fill="#f8df62" stroke="#fff" stroke-opacity="0.2" stroke-width="1.2"/><path d="M-3.2-4.4c-.2 2.4.5 4 2 4.4L1.6 4.2l.9-.6-1.8-4c1.6-1 2.6-2.6 2.5-4l-2.6 3.6-.7-.3 1.8-3.8-.6-.2-2.2 3.6-.8-.3z" fill="#fff"/><path d="M-2.4 4.2l5-7.8c.9.6 1 2 .1 3.2L-1.6 4.6z" fill="#fff" opacity=".9"/></g>
<g transform="translate(421.6 501.2)" opacity="0.82"><circle r="7.8" fill="#f8df62" stroke="#fff" stroke-opacity="0.2" stroke-width="1.2"/><path d="M-3.2-4.4c-.2 2.4.5 4 2 4.4L1.6 4.2l.9-.6-1.8-4c1.6-1 2.6-2.6 2.5-4l-2.6 3.6-.7-.3 1.8-3.8-.6-.2-2.2 3.6-.8-.3z" fill="#fff"/><path d="M-2.4 4.2l5-7.8c.9.6 1 2 .1 3.2L-1.6 4.6z" fill="#fff" opacity=".9"/></g>
<g transform="translate(458.4 492)" opacity="0.82"><circle r="7.8" fill="#f8df62" stroke="#fff" stroke-opacity="0.2" stroke-width="1.2"/><path d="M-3.2-4.4c-.2 2.4.5 4 2 4.4L1.6 4.2l.9-.6-1.8-4c1.6-1 2.6-2.6 2.5-4l-2.6 3.6-.7-.3 1.8-3.8-.6-.2-2.2 3.6-.8-.3z" fill="#fff"/><path d="M-2.4 4.2l5-7.8c.9.6 1 2 .1 3.2L-1.6 4.6z" fill="#fff" opacity=".9"/></g>
<g transform="translate(602 351)" opacity="0.82"><circle r="7.8" fill="#f8df62" stroke="#fff" stroke-opacity="0.2" stroke-width="1.2"/><path d="M-3.2-4.4c-.2 2.4.5 4 2 4.4L1.6 4.2l.9-.6-1.8-4c1.6-1 2.6-2.6 2.5-4l-2.6 3.6-.7-.3 1.8-3.8-.6-.2-2.2 3.6-.8-.3z" fill="#fff"/><path d="M-2.4 4.2l5-7.8c.9.6 1 2 .1 3.2L-1.6 4.6z" fill="#fff" opacity=".9"/></g>
<g transform="translate(666 274.8)" opacity="0.82"><circle r="7.8" fill="#f8df62" stroke="#fff" stroke-opacity="0.2" stroke-width="1.2"/><path d="M-3.2-4.4c-.2 2.4.5 4 2 4.4L1.6 4.2l.9-.6-1.8-4c1.6-1 2.6-2.6 2.5-4l-2.6 3.6-.7-.3 1.8-3.8-.6-.2-2.2 3.6-.8-.3z" fill="#fff"/><path d="M-2.4 4.2l5-7.8c.9.6 1 2 .1 3.2L-1.6 4.6z" fill="#fff" opacity=".9"/></g>
<g transform="translate(1008 154)" opacity="0.82"><circle r="7.8" fill="#f8df62" stroke="#fff" stroke-opacity="0.2" stroke-width="1.2"/><path d="M-3.2-4.4c-.2 2.4.5 4 2 4.4L1.6 4.2l.9-.6-1.8-4c1.6-1 2.6-2.6 2.5-4l-2.6 3.6-.7-.3 1.8-3.8-.6-.2-2.2 3.6-.8-.3z" fill="#fff"/><path d="M-2.4 4.2l5-7.8c.9.6 1 2 .1 3.2L-1.6 4.6z" fill="#fff" opacity=".9"/></g>
<g transform="translate(471.6 391.2)" opacity="0.95"><circle r="8.2" fill="#74b4e6" stroke="#fff" stroke-opacity="0.75" stroke-width="1.2"/><path d="M-4-4h8L.6.2v3.4h2v1h-5.2v-1h2V.2z" fill="#fff"/></g>
<g transform="translate(604.4 341.3)" opacity="0.95"><circle r="8.2" fill="#74b4e6" stroke="#fff" stroke-opacity="0.75" stroke-width="1.2"/><path d="M-4-4h8L.6.2v3.4h2v1h-5.2v-1h2V.2z" fill="#fff"/></g>
<g transform="translate(950.8 154)" opacity="0.95"><circle r="8.2" fill="#74b4e6" stroke="#fff" stroke-opacity="0.75" stroke-width="1.2"/><path d="M-4-4h8L.6.2v3.4h2v1h-5.2v-1h2V.2z" fill="#fff"/></g>
<g transform="translate(469.2 416.3)" opacity="0.95"><circle r="8.2" fill="#f3a661" stroke="#fff" stroke-opacity="0.75" stroke-width="1.2"/><path d="M-4-3H2.4V.4A2.2 2.2 0 0 1 .2 2.6H-1.8A2.2 2.2 0 0 1-4 .4Z" fill="#fff"/><path d="M2.4-2.2H3.4A1.4 1.4 0 0 1 3.4 .6H2.4" fill="none" stroke="#fff" stroke-width=".9"/><rect x="-4.4" y="3.4" width="7.4" height=".9" fill="#fff"/></g>
<g transform="translate(661 329.6)" opacity="0.95"><circle r="8.2" fill="#f3a661" stroke="#fff" stroke-opacity="0.75" stroke-width="1.2"/><path d="M-4-3H2.4V.4A2.2 2.2 0 0 1 .2 2.6H-1.8A2.2 2.2 0 0 1-4 .4Z" fill="#fff"/><path d="M2.4-2.2H3.4A1.4 1.4 0 0 1 3.4 .6H2.4" fill="none" stroke="#fff" stroke-width=".9"/><rect x="-4.4" y="3.4" width="7.4" height=".9" fill="#fff"/></g>
<g transform="translate(626.7 496)" opacity="0.95"><circle r="8.2" fill="#cb8a78" stroke="#fff" stroke-opacity="0.75" stroke-width="1.2"/><path d="M-4.8-3.8H-3.3L-2.9-2.8H3.8L2.6 .8H-2L-2.4 1.6H2.9V2.4H-3.6L-2.8 .5L-4.2-3H-4.8Z" fill="#fff"/><circle cx="-2.2" cy="3.8" r=".8" fill="#fff"/><circle cx="2.2" cy="3.8" r=".8" fill="#fff"/></g>
<g transform="translate(853.7 146)" opacity="0.95"><circle r="8.2" fill="#c56a55" stroke="#fff" stroke-opacity="0.75" stroke-width="1.2"/><path d="M-4-3H2.4V.4A2.2 2.2 0 0 1 .2 2.6H-1.8A2.2 2.2 0 0 1-4 .4Z" fill="#fff"/><path d="M2.4-2.2H3.4A1.4 1.4 0 0 1 3.4 .6H2.4" fill="none" stroke="#fff" stroke-width=".9"/><rect x="-4.4" y="3.4" width="7.4" height=".9" fill="#fff"/></g>
<g transform="translate(615 146.5)"><circle r="8.2" fill="#fff"/><circle r="6.6" fill="none" stroke="#8e62cc" stroke-width="2.6"/></g></g>
<g class="hx" filter="url(#bl3)"><polygon points="399,226.1 406.7,230.6 406.7,239.4 399,243.9 391.3,239.4 391.3,230.6" fill="#f17e2b" stroke="#ffffff" stroke-opacity=".55" stroke-width="1"/>
<text x="399" y="237.3" fill="#ffffff">19</text>
<polygon points="508.7,192.5 516.4,197 516.4,205.8 508.7,210.3 501,205.8 501,197" fill="#e35f04" stroke="#ffffff" stroke-opacity=".55" stroke-width="1"/>
<text x="508.7" y="203.7" fill="#ffffff">19</text>
<polygon points="500.7,206.5 508.4,211 508.4,219.8 500.7,224.3 493,219.8 493,211" fill="#5a2a0e" stroke="#ffffff" stroke-opacity=".55" stroke-width="1"/>
<text x="500.7" y="217.7" fill="#ffffff">83</text>
<polygon points="574.3,188.8 582,193.2 582,202.1 574.3,206.6 566.6,202.1 566.6,193.2" fill="#f9d2ba" stroke="#ffffff" stroke-opacity=".55" stroke-width="1"/>
<text x="574.3" y="200" fill="#2a3350">2</text>
<polygon points="566.6,202.8 574.3,207.2 574.3,216.1 566.6,220.6 558.9,216.1 558.9,207.2" fill="#c4dbf9" stroke="#ffffff" stroke-opacity=".55" stroke-width="1"/>
<text x="566.6" y="214" fill="#2a3350">4</text>
<polygon points="463,225.8 470.7,230.2 470.7,239.1 463,243.6 455.3,239.1 455.3,230.2" fill="#c4dbf9" stroke="#ffffff" stroke-opacity=".55" stroke-width="1"/>
<text x="463" y="237" fill="#2a3350">1</text>
<polygon points="455.8,240.1 463.5,244.6 463.5,253.4 455.8,257.9 448.1,253.4 448.1,244.6" fill="#338df0" stroke="#ffffff" stroke-opacity=".55" stroke-width="1"/>
<text x="455.8" y="251.3" fill="#ffffff">13</text>
<polygon points="410.8,285.1 418.5,289.6 418.5,298.4 410.8,302.9 403.1,298.4 403.1,289.6" fill="#c4dbf9" stroke="#ffffff" stroke-opacity=".55" stroke-width="1"/>
<text x="410.8" y="296.3" fill="#2a3350">1</text>
<polygon points="473,284.5 480.7,288.9 480.7,297.8 473,302.3 465.3,297.8 465.3,288.9" fill="#e35f04" stroke="#ffffff" stroke-opacity=".55" stroke-width="1"/>
<text x="473" y="295.7" fill="#ffffff">44</text>
<polygon points="465,298.6 472.7,303.1 472.7,311.9 465,316.4 457.3,311.9 457.3,303.1" fill="#f6ae84" stroke="#ffffff" stroke-opacity=".55" stroke-width="1"/>
<text x="465" y="309.8" fill="#2a3350">11</text>
<polygon points="457,312.8 464.7,317.2 464.7,326.1 457,330.6 449.3,326.1 449.3,317.2" fill="#f17e2b" stroke="#ffffff" stroke-opacity=".55" stroke-width="1"/>
<text x="457" y="324" fill="#ffffff">30</text>
<polygon points="473,312.8 480.7,317.2 480.7,326.1 473,330.6 465.3,326.1 465.3,317.2" fill="#9cc4f8" stroke="#ffffff" stroke-opacity=".55" stroke-width="1"/>
<text x="473" y="324" fill="#2a3350">3</text>
<polygon points="410,321.1 417.7,325.6 417.7,334.4 410,338.9 402.3,334.4 402.3,325.6" fill="#9c430c" stroke="#ffffff" stroke-opacity=".55" stroke-width="1"/>
<text x="410" y="332.3" fill="#ffffff">51</text>
<polygon points="449.4,326.4 457.1,330.9 457.1,339.8 449.4,344.2 441.7,339.8 441.7,330.9" fill="#338df0" stroke="#ffffff" stroke-opacity=".55" stroke-width="1"/>
<text x="449.4" y="337.6" fill="#ffffff">14</text>
<polygon points="465.3,326.4 473,330.9 473,339.8 465.3,344.2 457.6,339.8 457.6,330.9" fill="#338df0" stroke="#ffffff" stroke-opacity=".55" stroke-width="1"/>
<text x="465.3" y="337.6" fill="#ffffff">12</text>
<polygon points="496.2,325.8 503.9,330.2 503.9,339.1 496.2,343.6 488.5,339.1 488.5,330.2" fill="#f9d2ba" stroke="#ffffff" stroke-opacity=".55" stroke-width="1"/>
<text x="496.2" y="337" fill="#2a3350">2</text>
<polygon points="552,299.1 559.7,303.6 559.7,312.4 552,316.9 544.3,312.4 544.3,303.6" fill="#f9d2ba" stroke="#ffffff" stroke-opacity=".55" stroke-width="1"/>
<text x="552" y="310.3" fill="#2a3350">1</text>
<polygon points="568.5,299.1 576.2,303.6 576.2,312.4 568.5,316.9 560.8,312.4 560.8,303.6" fill="#f9d2ba" stroke="#ffffff" stroke-opacity=".55" stroke-width="1"/>
<text x="568.5" y="310.3" fill="#2a3350">6</text>
<polygon points="577,312.8 584.7,317.2 584.7,326.1 577,330.6 569.3,326.1 569.3,317.2" fill="#338df0" stroke="#ffffff" stroke-opacity=".55" stroke-width="1"/>
<text x="577" y="324" fill="#ffffff">11</text>
<polygon points="376.4,342.8 384.1,347.2 384.1,356.1 376.4,360.6 368.7,356.1 368.7,347.2" fill="#c4dbf9" stroke="#ffffff" stroke-opacity=".55" stroke-width="1"/>
<text x="376.4" y="354" fill="#2a3350">2</text>
<polygon points="441.2,340.5 448.9,344.9 448.9,353.8 441.2,358.3 433.5,353.8 433.5,344.9" fill="#338df0" stroke="#ffffff" stroke-opacity=".55" stroke-width="1"/>
<text x="441.2" y="351.7" fill="#ffffff">21</text>
<polygon points="473.2,340.1 480.9,344.6 480.9,353.4 473.2,357.9 465.5,353.4 465.5,344.6" fill="#f9d2ba" stroke="#ffffff" stroke-opacity=".55" stroke-width="1"/>
<text x="473.2" y="351.3" fill="#2a3350">2</text>
<polygon points="489,340.1 496.7,344.6 496.7,353.4 489,357.9 481.3,353.4 481.3,344.6" fill="#9cc4f8" stroke="#ffffff" stroke-opacity=".55" stroke-width="1"/>
<text x="489" y="351.3" fill="#2a3350">13</text>
<polygon points="433.3,354.4 441,358.9 441,367.8 433.3,372.2 425.6,367.8 425.6,358.9" fill="#f9d2ba" stroke="#ffffff" stroke-opacity=".55" stroke-width="1"/>
<text x="433.3" y="365.6" fill="#2a3350">1</text>
<polygon points="496.5,354.7 504.2,359.2 504.2,368.1 496.5,372.5 488.8,368.1 488.8,359.2" fill="#f17e2b" stroke="#ffffff" stroke-opacity=".55" stroke-width="1"/>
<text x="496.5" y="365.9" fill="#ffffff">37</text>
<polygon points="440.7,368.5 448.4,372.9 448.4,381.8 440.7,386.3 433,381.8 433,372.9" fill="#338df0" stroke="#ffffff" stroke-opacity=".55" stroke-width="1"/>
<text x="440.7" y="379.7" fill="#ffffff">22</text>
<polygon points="432.7,382.5 440.4,386.9 440.4,395.8 432.7,400.3 425,395.8 425,386.9" fill="#338df0" stroke="#ffffff" stroke-opacity=".55" stroke-width="1"/>
<text x="432.7" y="393.7" fill="#ffffff">18</text>
<polygon points="496.5,401.1 504.2,405.6 504.2,414.4 496.5,418.9 488.8,414.4 488.8,405.6" fill="#f17e2b" stroke="#ffffff" stroke-opacity=".55" stroke-width="1"/>
<text x="496.5" y="412.3" fill="#ffffff">38</text>
<polygon points="512.4,401.1 520.1,405.6 520.1,414.4 512.4,418.9 504.7,414.4 504.7,405.6" fill="#338df0" stroke="#ffffff" stroke-opacity=".55" stroke-width="1"/>
<text x="512.4" y="412.3" fill="#ffffff">17</text>
<polygon points="528.5,401.1 536.2,405.6 536.2,414.4 528.5,418.9 520.8,414.4 520.8,405.6" fill="#338df0" stroke="#ffffff" stroke-opacity=".55" stroke-width="1"/>
<text x="528.5" y="412.3" fill="#ffffff">41</text>
<polygon points="544.4,401.1 552.1,405.6 552.1,414.4 544.4,418.9 536.7,414.4 536.7,405.6" fill="#f6ae84" stroke="#ffffff" stroke-opacity=".55" stroke-width="1"/>
<text x="544.4" y="412.3" fill="#2a3350">12</text>
<polygon points="560.3,401.1 568,405.6 568,414.4 560.3,418.9 552.6,414.4 552.6,405.6" fill="#f6ae84" stroke="#ffffff" stroke-opacity=".55" stroke-width="1"/>
<text x="560.3" y="412.3" fill="#2a3350">15</text>
<polygon points="576.4,401.1 584.1,405.6 584.1,414.4 576.4,418.9 568.7,414.4 568.7,405.6" fill="#c4dbf9" stroke="#ffffff" stroke-opacity=".55" stroke-width="1"/>
<text x="576.4" y="412.3" fill="#2a3350">1</text>
<polygon points="568.5,387.3 576.2,391.8 576.2,400.6 568.5,405.1 560.8,400.6 560.8,391.8" fill="#e35f04" stroke="#ffffff" stroke-opacity=".55" stroke-width="1"/>
<text x="568.5" y="398.5" fill="#ffffff">44</text>
<polygon points="576.4,373.3 584.1,377.8 584.1,386.6 576.4,391.1 568.7,386.6 568.7,377.8" fill="#f9d2ba" stroke="#ffffff" stroke-opacity=".55" stroke-width="1"/>
<text x="576.4" y="384.5" fill="#2a3350">2</text>
<polygon points="568.5,359.5 576.2,363.9 576.2,372.8 568.5,377.3 560.8,372.8 560.8,363.9" fill="#f9d2ba" stroke="#ffffff" stroke-opacity=".55" stroke-width="1"/>
<text x="568.5" y="370.7" fill="#2a3350">1</text>
<polygon points="552.3,359.5 560,363.9 560,372.8 552.3,377.3 544.6,372.8 544.6,363.9" fill="#338df0" stroke="#ffffff" stroke-opacity=".55" stroke-width="1"/>
<text x="552.3" y="370.7" fill="#ffffff">16</text>
<polygon points="536,359.5 543.7,363.9 543.7,372.8 536,377.3 528.3,372.8 528.3,363.9" fill="#f9d2ba" stroke="#ffffff" stroke-opacity=".55" stroke-width="1"/>
<text x="536" y="370.7" fill="#2a3350">11</text>
<polygon points="560.3,346.1 568,350.6 568,359.4 560.3,363.9 552.6,359.4 552.6,350.6" fill="#f9d2ba" stroke="#ffffff" stroke-opacity=".55" stroke-width="1"/>
<text x="560.3" y="357.3" fill="#2a3350">1</text>
<polygon points="577.7,346.1 585.4,350.6 585.4,359.4 577.7,363.9 570,359.4 570,350.6" fill="#9cc4f8" stroke="#ffffff" stroke-opacity=".55" stroke-width="1"/>
<text x="577.7" y="357.3" fill="#2a3350">3</text>
<polygon points="488.6,414.8 496.3,419.2 496.3,428.1 488.6,432.6 480.9,428.1 480.9,419.2" fill="#c4dbf9" stroke="#ffffff" stroke-opacity=".55" stroke-width="1"/>
<text x="488.6" y="426" fill="#2a3350">2</text>
<polygon points="480.4,428.6 488.1,433.1 488.1,441.9 480.4,446.4 472.7,441.9 472.7,433.1" fill="#0c3f8f" stroke="#ffffff" stroke-opacity=".55" stroke-width="1"/>
<text x="480.4" y="439.8" fill="#ffffff">62</text>
<polygon points="584.3,414.8 592,419.2 592,428.1 584.3,432.6 576.6,428.1 576.6,419.2" fill="#c4dbf9" stroke="#ffffff" stroke-opacity=".55" stroke-width="1"/>
<text x="584.3" y="426" fill="#2a3350">3</text>
<polygon points="576.4,428.6 584.1,433.1 584.1,441.9 576.4,446.4 568.7,441.9 568.7,433.1" fill="#c4dbf9" stroke="#ffffff" stroke-opacity=".55" stroke-width="1"/>
<text x="576.4" y="439.8" fill="#2a3350">4</text>
<polygon points="372.7,436.8 380.4,441.2 380.4,450.1 372.7,454.6 365,450.1 365,441.2" fill="#f9d2ba" stroke="#ffffff" stroke-opacity=".55" stroke-width="1"/>
<text x="372.7" y="448" fill="#2a3350">13</text>
<polygon points="388.6,436.8 396.3,441.2 396.3,450.1 388.6,454.6 380.9,450.1 380.9,441.2" fill="#e35f04" stroke="#ffffff" stroke-opacity=".55" stroke-width="1"/>
<text x="388.6" y="448" fill="#ffffff">19</text>
<polygon points="405,436.8 412.7,441.2 412.7,450.1 405,454.6 397.3,450.1 397.3,441.2" fill="#9c430c" stroke="#ffffff" stroke-opacity=".55" stroke-width="1"/>
<text x="405" y="448" fill="#ffffff">61</text>
<polygon points="530.6,459.1 538.3,463.6 538.3,472.4 530.6,476.9 522.9,472.4 522.9,463.6" fill="#c4dbf9" stroke="#ffffff" stroke-opacity=".55" stroke-width="1"/>
<text x="530.6" y="470.3" fill="#2a3350">4</text>
<polygon points="546.5,459.1 554.2,463.6 554.2,472.4 546.5,476.9 538.8,472.4 538.8,463.6" fill="#f9d2ba" stroke="#ffffff" stroke-opacity=".55" stroke-width="1"/>
<text x="546.5" y="470.3" fill="#2a3350">1</text>
<polygon points="562.4,459.1 570.1,463.6 570.1,472.4 562.4,476.9 554.7,472.4 554.7,463.6" fill="#338df0" stroke="#ffffff" stroke-opacity=".55" stroke-width="1"/>
<text x="562.4" y="470.3" fill="#ffffff">21</text>
<polygon points="465.8,474.6 473.5,479.1 473.5,487.9 465.8,492.4 458.1,487.9 458.1,479.1" fill="#c4dbf9" stroke="#ffffff" stroke-opacity=".55" stroke-width="1"/>
<text x="465.8" y="485.8" fill="#2a3350">2</text>
<polygon points="502.3,473.8 510,478.2 510,487.1 502.3,491.6 494.6,487.1 494.6,478.2" fill="#f9d2ba" stroke="#ffffff" stroke-opacity=".55" stroke-width="1"/>
<text x="502.3" y="485" fill="#2a3350">13</text>
<polygon points="510.8,487.8 518.5,492.2 518.5,501.1 510.8,505.6 503.1,501.1 503.1,492.2" fill="#c4dbf9" stroke="#ffffff" stroke-opacity=".55" stroke-width="1"/>
<text x="510.8" y="499" fill="#2a3350">1</text>
<polygon points="502.3,501.6 510,506.1 510,515 502.3,519.4 494.6,515 494.6,506.1" fill="#0b2654" stroke="#ffffff" stroke-opacity=".55" stroke-width="1"/>
<text x="502.3" y="512.8" fill="#ffffff">72</text>
<polygon points="606,360.3 613.7,364.8 613.7,373.6 606,378.1 598.3,373.6 598.3,364.8" fill="#c4dbf9" stroke="#ffffff" stroke-opacity=".55" stroke-width="1"/>
<text x="606" y="371.5" fill="#2a3350">2</text>
<polygon points="638,360.3 645.7,364.8 645.7,373.6 638,378.1 630.3,373.6 630.3,364.8" fill="#c4dbf9" stroke="#ffffff" stroke-opacity=".55" stroke-width="1"/>
<text x="638" y="371.5" fill="#2a3350">1</text>
<polygon points="654.6,360.3 662.3,364.8 662.3,373.6 654.6,378.1 646.9,373.6 646.9,364.8" fill="#c4dbf9" stroke="#ffffff" stroke-opacity=".55" stroke-width="1"/>
<text x="654.6" y="371.5" fill="#2a3350">9</text>
<polygon points="614,374.1 621.7,378.6 621.7,387.4 614,391.9 606.3,387.4 606.3,378.6" fill="#c4dbf9" stroke="#ffffff" stroke-opacity=".55" stroke-width="1"/>
<text x="614" y="385.3" fill="#2a3350">3</text>
<polygon points="630,374.1 637.7,378.6 637.7,387.4 630,391.9 622.3,387.4 622.3,378.6" fill="#f6ae84" stroke="#ffffff" stroke-opacity=".55" stroke-width="1"/>
<text x="630" y="385.3" fill="#2a3350">20</text>
<polygon points="646.7,374.1 654.4,378.6 654.4,387.4 646.7,391.9 639,387.4 639,378.6" fill="#c4dbf9" stroke="#ffffff" stroke-opacity=".55" stroke-width="1"/>
<text x="646.7" y="385.3" fill="#2a3350">7</text>
<polygon points="654.6,387.5 662.3,391.9 662.3,400.8 654.6,405.3 646.9,400.8 646.9,391.9" fill="#0c3f8f" stroke="#ffffff" stroke-opacity=".55" stroke-width="1"/>
<text x="654.6" y="398.7" fill="#ffffff">22</text>
<polygon points="646.7,401.1 654.4,405.6 654.4,414.4 646.7,418.9 639,414.4 639,405.6" fill="#f9d2ba" stroke="#ffffff" stroke-opacity=".55" stroke-width="1"/>
<text x="646.7" y="412.3" fill="#2a3350">15</text>
<polygon points="662.8,401.1 670.5,405.6 670.5,414.4 662.8,418.9 655.1,414.4 655.1,405.6" fill="#c4dbf9" stroke="#ffffff" stroke-opacity=".55" stroke-width="1"/>
<text x="662.8" y="412.3" fill="#2a3350">8</text>
<polygon points="638.8,415.1 646.5,419.6 646.5,428.4 638.8,432.9 631.1,428.4 631.1,419.6" fill="#338df0" stroke="#ffffff" stroke-opacity=".55" stroke-width="1"/>
<text x="638.8" y="426.3" fill="#ffffff">14</text>
<polygon points="655.3,415.1 663,419.6 663,428.4 655.3,432.9 647.6,428.4 647.6,419.6" fill="#c4dbf9" stroke="#ffffff" stroke-opacity=".55" stroke-width="1"/>
<text x="655.3" y="426.3" fill="#2a3350">3</text>
<polygon points="614.7,429.1 622.4,433.6 622.4,442.4 614.7,446.9 607,442.4 607,433.6" fill="#f9d2ba" stroke="#ffffff" stroke-opacity=".55" stroke-width="1"/>
<text x="614.7" y="440.3" fill="#2a3350">6</text>
<polygon points="631,429.1 638.7,433.6 638.7,442.4 631,446.9 623.3,442.4 623.3,433.6" fill="#c4dbf9" stroke="#ffffff" stroke-opacity=".55" stroke-width="1"/>
<text x="631" y="440.3" fill="#2a3350">7</text>
<polygon points="356.3,496.8 364,501.2 364,510.1 356.3,514.6 348.6,510.1 348.6,501.2" fill="#c4dbf9" stroke="#ffffff" stroke-opacity=".55" stroke-width="1"/>
<text x="356.3" y="508" fill="#2a3350">5</text>
<polygon points="543.4,516.5 551.1,520.9 551.1,529.9 543.4,534.3 535.7,529.9 535.7,520.9" fill="#c4dbf9" stroke="#ffffff" stroke-opacity=".55" stroke-width="1"/>
<text x="543.4" y="527.7" fill="#2a3350">4</text>
<polygon points="577,534.8 584.7,539.2 584.7,548.2 577,552.6 569.3,548.2 569.3,539.2" fill="#0b2654" stroke="#ffffff" stroke-opacity=".55" stroke-width="1"/>
<text x="577" y="546" fill="#ffffff">70</text>
<polygon points="569,548.5 576.7,552.9 576.7,561.9 569,566.3 561.3,561.9 561.3,552.9" fill="#f17e2b" stroke="#ffffff" stroke-opacity=".55" stroke-width="1"/>
<text x="569" y="559.7" fill="#ffffff">33</text></g><rect id="rightfade" x="999" y="140" width="20" height="440" fill="#fbfaf8" opacity=".4"/></svg>

   <div id="legend"><div class="lh"></div><div class="lt">LEGEND</div>
    <svg class="abs" style="left:201.5px;top:8px" width="7" height="5" viewBox="0 0 7 5"><path d="M.7 4.2L3.5 1.2 6.3 4.2" fill="none" stroke="#4d556b" stroke-width="1.2"/></svg>
    <div class="pc" style="left:12px">-80%</div>
    <div class="bar"><i style="background:#5a2a0e"></i><i style="background:#9c430c"></i><i style="background:#e35f04"></i><i style="background:#f58a3e"></i><i style="background:#f9bf9b"></i><i style="background:#fad8c5"></i><i style="background:#cfe2fb"></i><i style="background:#a3c9f9"></i><i style="background:#4f9df5"></i><i style="background:#1878ee"></i><i style="background:#0d4ea8"></i><i style="background:#0b2654"></i></div>
    <div class="pc" style="left:191px">+80%</div>
   </div>
  </div>
 </div>
</div>
<div id="panel">
 <div class="t" style="left:28px;top:13px;font-size:20.4px;letter-spacing:-.36px;line-height:24px">Map Controls</div>
 <svg class="abs" style="left:286px;top:18.5px" width="14" height="9" viewBox="0 0 14 9"><path d="M1.3 1.3L7 7l5.7-5.7" fill="none" stroke="#fff" stroke-width="2.1"/></svg>
 <div class="hr"></div>
 <div class="t" style="top:73.5px;font-size:20px;line-height:24px">Metrics</div>
 <div class="row" style="top:108px"><i></i><span style="letter-spacing:.11px">Planned Orders</span></div>
 <div class="row" style="top:155px"><i></i><span>Executed Orders</span></div>
 <div class="row" style="top:202.5px"><i></i><span style="letter-spacing:-.35px">Delivery Success %</span></div>
 <div class="row" style="top:249.5px"><i></i><span style="letter-spacing:.2px">Unallocated Orders</span></div>
 <div class="row" style="top:297px"><i></i><span style="letter-spacing:.09px">Average Delivery Time</span></div>
 <div class="row" style="top:344px"><i></i><span>Tasks on time</span></div>
 <div class="row" style="top:391.5px"><i class="on"></i><span style="letter-spacing:-.28px">Tasks Delayed</span></div>
 <div class="t" style="top:451px;font-size:20px;letter-spacing:-.16px;line-height:24px">Visualisation</div>
 <div class="row" style="top:485.5px;border-top:none"><i class="on"></i><span style="letter-spacing:.24px">Hexagon Marker</span></div>
 <div class="row" style="top:532.5px;border-top:none"><i></i><span style="letter-spacing:-.21px">By Pincode</span></div>
</div>
</body></html>
